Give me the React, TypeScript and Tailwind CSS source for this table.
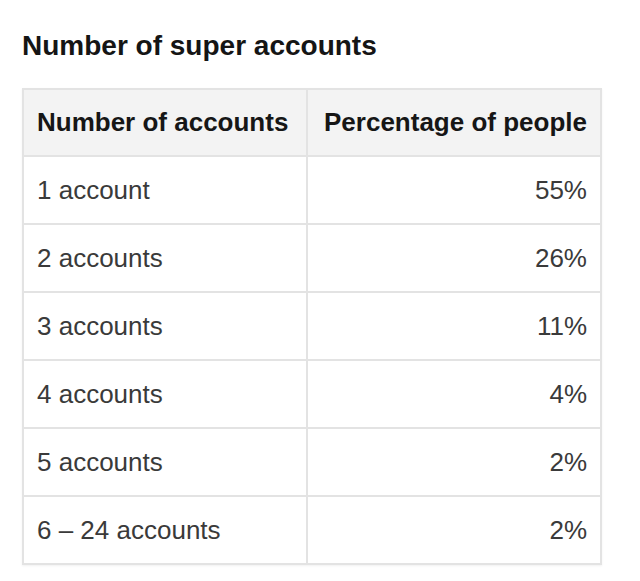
const rows = [
  ['1 account', '55%'],
  ['2 accounts', '26%'],
  ['3 accounts', '11%'],
  ['4 accounts', '4%'],
  ['5 accounts', '2%'],
  ['6 – 24 accounts', '2%'],
]

export default function App() {
  return (
    <div className="min-h-[581px] w-[640px] bg-white pl-[22px] pt-[30px] font-['Liberation_Sans',Arial,sans-serif]">
      <h2 className="text-[28px] font-bold leading-[32px] text-[#151515]">Number of super accounts</h2>
      <table className="mt-[26px] w-[580px] border-collapse border-2 border-[#e3e3e3] shadow-[0_1px_2px_rgba(0,0,0,0.06)]">
        <thead>
          <tr className="h-[67px] bg-[#f3f3f3]">
            <th className="w-[284px] border-2 border-[#e3e3e3] px-[13px] text-left text-[26px] font-bold text-[#161616]">
              Number of accounts
            </th>
            <th className="border-2 border-[#e3e3e3] px-[13px] text-right text-[26px] font-bold text-[#161616]">
              Percentage of people
            </th>
          </tr>
        </thead>
        <tbody>
          {rows.map(([label, pct]) => (
            <tr key={label} className="h-[68px]">
              <td className="border-2 border-[#e3e3e3] px-[13px] text-left text-[26px] text-[#3a3a3a]">{label}</td>
              <td className="border-2 border-[#e3e3e3] px-[13px] text-right text-[26px] text-[#3a3a3a]">{pct}</td>
            </tr>
          ))}
        </tbody>
      </table>
    </div>
  )
}
